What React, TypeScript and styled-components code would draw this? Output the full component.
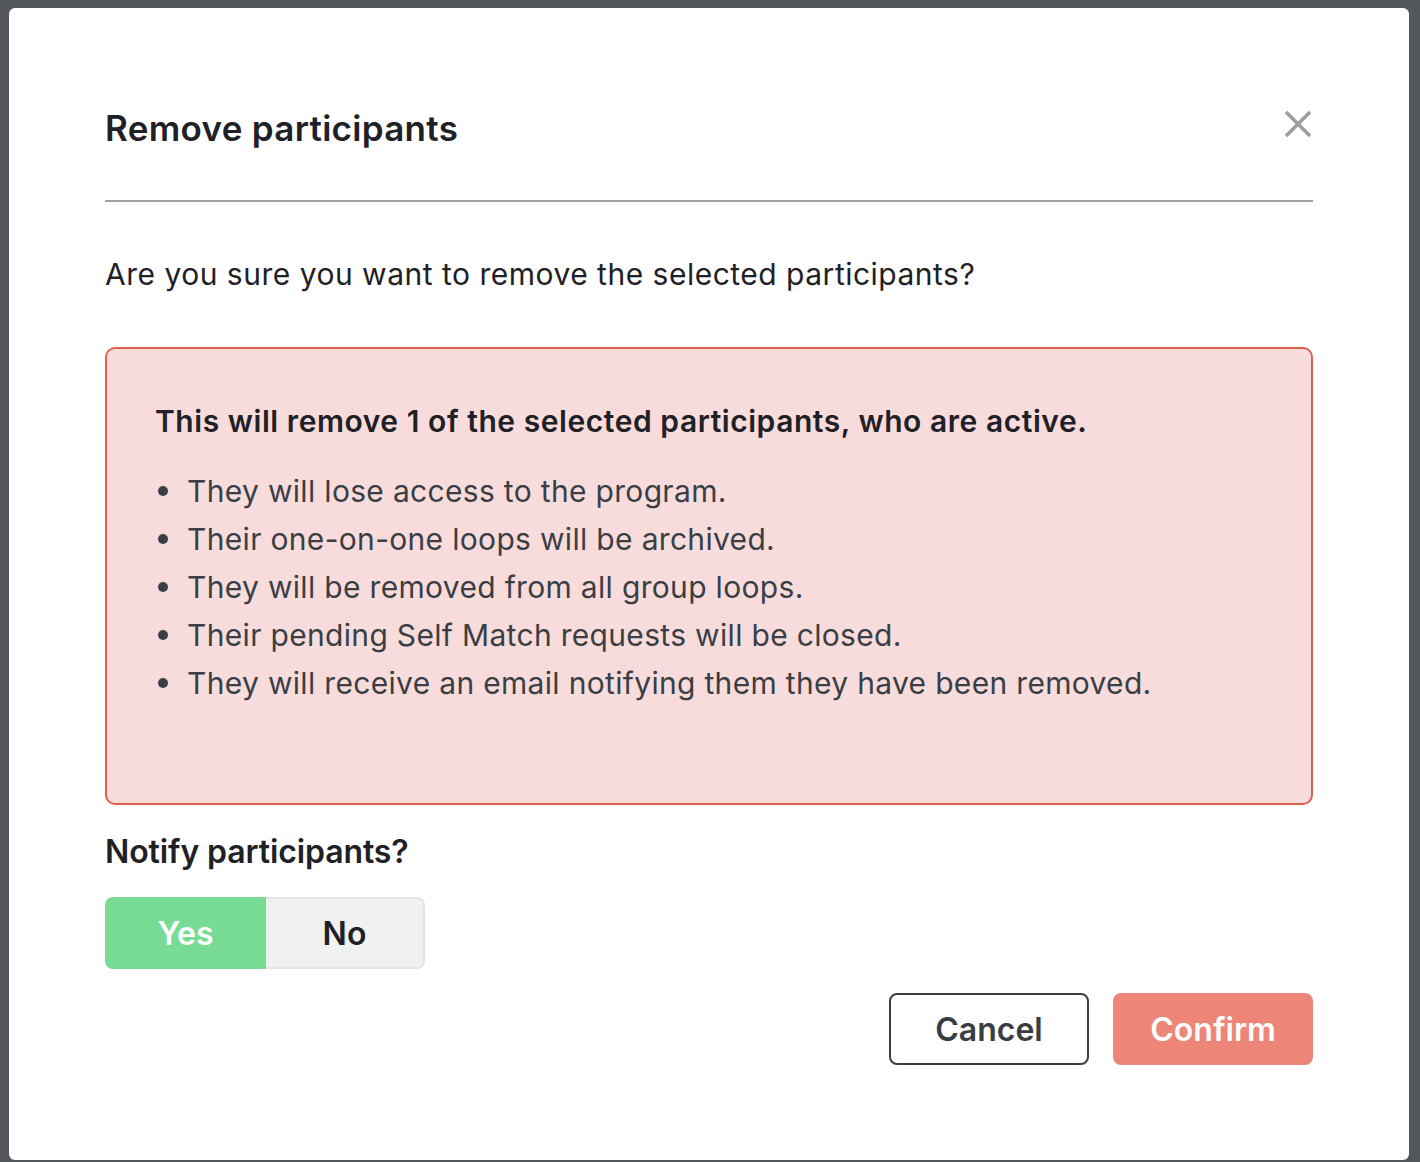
import { createGlobalStyle, styled } from "styled-components";

const GlobalStyle = createGlobalStyle`
    html, body {
        margin: 0;
        padding: 0;
        background: #53565b;
        font-family: "Inter", "Liberation Sans", sans-serif;
    }
    * {
        box-sizing: border-box;
    }
`;

const Backdrop = styled.div`
    min-height: 1162px;
    padding: 8px 11px 2px 9px;
`;

const Modal = styled.div`
    background: white;
    border-radius: 6px;
    height: 1152px;
    padding: 0 96px;
    display: flex;
    flex-direction: column;
`;

const Header = styled.div`
    display: flex;
    justify-content: space-between;
    align-items: center;
    padding: 96px 0 48px;
    border-bottom: 2px solid #a0a0a5;
`;

const Title = styled.h2`
    margin: 0;
    font-size: 35px;
    line-height: 48px;
    font-weight: 600;
    color: #1f2126;
    letter-spacing: 0.3px;
`;

const CloseButton = styled.button`
    border: none;
    background: none;
    padding: 0;
    width: 30px;
    height: 30px;
    margin-top: -8px;
    display: flex;
    align-items: center;
    justify-content: center;
    cursor: pointer;
`;

const Question = styled.p`
    margin: 48px 0 0;
    font-size: 30px;
    line-height: 48px;
    color: #1f2126;
    letter-spacing: 0.5px;
`;

const Warning = styled.div`
    margin-top: 49px;
    background: #f8dcdc;
    border: 2px solid #e0604f;
    border-radius: 10px;
    padding: 48px 48px 96px;
`;

const WarningTitle = styled.p`
    margin: 0 0 22px;
    font-size: 30px;
    line-height: 48px;
    font-weight: 600;
    color: #1f2126;
    letter-spacing: 0.55px;
`;

const List = styled.ul`
    margin: 0;
    padding: 0;
    list-style: none;
`;

const Item = styled.li`
    display: flex;
    align-items: center;
    font-size: 30px;
    line-height: 48px;
    color: #3a3e45;
    letter-spacing: 0.32px;

    &::before {
        content: "";
        width: 10px;
        height: 10px;
        border-radius: 50%;
        background: #3a3e45;
        margin: 0 19px 0 3px;
        flex-shrink: 0;
    }
`;

const Label = styled.p`
    margin: 23px 0 0;
    font-size: 32px;
    line-height: 48px;
    font-weight: 600;
    color: #1f2126;
    letter-spacing: -0.1px;
`;

const Toggle = styled.div`
    display: flex;
    margin-top: 21px;
    width: 320px;
    height: 72px;
`;

const ToggleOption = styled.button<{ $active?: boolean }>`
    flex: 1;
    border: 2px solid ${(p) => (p.$active ? "#77db94" : "#e3e4e4")};
    background: ${(p) => (p.$active ? "#77db94" : "#f0f1f1")};
    color: ${(p) => (p.$active ? "white" : "#1f2126")};
    font-family: inherit;
    font-size: 32px;
    font-weight: 600;
    padding: 0;
    cursor: pointer;

    &:first-child {
        border-radius: 8px 0 0 8px;
    }
    &:last-child {
        border-radius: 0 8px 8px 0;
        border-left: none;
    }
`;

const Actions = styled.div`
    display: flex;
    justify-content: flex-end;
    gap: 24px;
    margin-top: 24px;
`;

const ActionButton = styled.button<{ $primary?: boolean }>`
    width: 200px;
    height: 72px;
    border-radius: 8px;
    border: 2px solid ${(p) => (p.$primary ? "#ee8579" : "#3a3d42")};
    background: ${(p) => (p.$primary ? "#ee8579" : "white")};
    color: ${(p) => (p.$primary ? "white" : "#3a3d42")};
    font-family: inherit;
    font-size: 32px;
    font-weight: 600;
    cursor: pointer;
`;

const bullets = [
    "They will lose access to the program.",
    "Their one-on-one loops will be archived.",
    "They will be removed from all group loops.",
    "Their pending Self Match requests will be closed.",
    "They will receive an email notifying them they have been removed.",
];

export default function App() {
    return (
        <>
            <GlobalStyle />
            <Backdrop>
                <Modal>
                    <Header>
                        <Title>Remove participants</Title>
                        <CloseButton aria-label="Close">
                            <svg width="28" height="28" viewBox="0 0 28 28">
                                <path d="M2 2 L26 26 M26 2 L2 26" stroke="#9b9ba0" strokeWidth="3.5" />
                            </svg>
                        </CloseButton>
                    </Header>
                    <Question>Are you sure you want to remove the selected participants?</Question>
                    <Warning>
                        <WarningTitle>This will remove 1 of the selected participants, who are active.</WarningTitle>
                        <List>
                            {bullets.map((text, index) => <Item key={index}>{text}</Item>)}
                        </List>
                    </Warning>
                    <Label>Notify participants?</Label>
                    <Toggle>
                        <ToggleOption $active>Yes</ToggleOption>
                        <ToggleOption>No</ToggleOption>
                    </Toggle>
                    <Actions>
                        <ActionButton>Cancel</ActionButton>
                        <ActionButton $primary>Confirm</ActionButton>
                    </Actions>
                </Modal>
            </Backdrop>
        </>
    );
}
